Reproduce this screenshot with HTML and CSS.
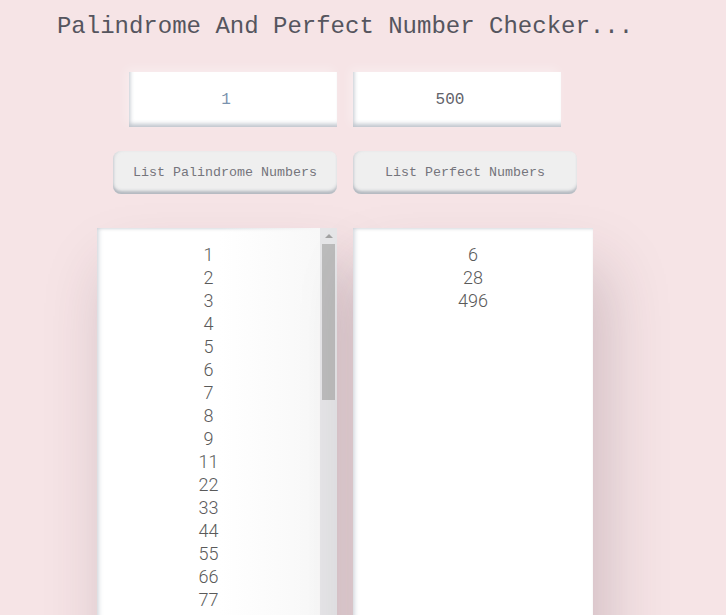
FILE: index.html
```html
<!DOCTYPE html>
<html lang="en">
<head>
<meta charset="utf-8">
<title>Palindrome And Perfect Number Checker</title>
<link rel="stylesheet" href="styles.css">
</head>
<body>
<main class="app">
  <h1 class="title">Palindrome And Perfect Number Checker...</h1>
  <div class="row inputs">
    <input class="num-input start" type="text" value="1">
    <input class="num-input end" type="text" value="500">
  </div>
  <div class="row buttons">
    <button class="btn start" type="button">List Palindrome Numbers</button>
    <button class="btn end" type="button">List Perfect Numbers</button>
  </div>
  <div class="row lists">
    <div class="list start with-scroll">
      <div class="list-body fade">
        <div>1</div><div>2</div><div>3</div><div>4</div><div>5</div><div>6</div><div>7</div><div>8</div><div>9</div>
        <div>11</div><div>22</div><div>33</div><div>44</div><div>55</div><div>66</div><div>77</div><div>88</div><div>99</div>
        <div>101</div><div>111</div><div>121</div><div>131</div><div>141</div><div>151</div><div>161</div><div>171</div><div>181</div><div>191</div>
        <div>202</div><div>212</div><div>222</div><div>232</div><div>242</div><div>252</div><div>262</div><div>272</div><div>282</div><div>292</div>
        <div>303</div><div>313</div><div>323</div><div>333</div><div>343</div><div>353</div><div>363</div><div>373</div><div>383</div><div>393</div>
        <div>404</div><div>414</div><div>424</div><div>434</div><div>444</div><div>454</div><div>464</div><div>474</div><div>484</div><div>494</div>
      </div>
      <div class="scrollbar" aria-hidden="true">
        <div class="sb-arrow"></div>
        <div class="sb-thumb"></div>
      </div>
    </div>
    <div class="list end">
      <div class="list-body">
        <div>6</div><div>28</div><div>496</div>
      </div>
    </div>
  </div>
</main>
</body>
</html>
```

FILE: styles.css
```css
html, body {
  margin: 0;
  padding: 0;
  background: #f6e4e6;
  height: 100%;
  overflow: hidden;
}

.app {
  width: 690px;
  display: flex;
  flex-direction: column;
  font-family: "Liberation Mono", "DejaVu Sans Mono", monospace;
}

.title {
  margin: 13px 0 0;
  font-size: 24px;
  line-height: 28px;
  font-weight: normal;
  color: #55555e;
  text-align: center;
  white-space: nowrap;
}

.row {
  display: grid;
  grid-template-columns: 337px 337px;
  column-gap: 16px;
}

.row .start { justify-self: end; }
.row .end { justify-self: start; }

.inputs { margin-top: 31px; }

.num-input {
  box-sizing: border-box;
  width: 208px;
  height: 55px;
  margin: 0;
  border: none;
  outline: none;
  background: #fff;
  padding: 0 14px 0 0;
  font-family: "Liberation Mono", "DejaVu Sans Mono", monospace;
  font-size: 16px;
  color: #62626a;
  text-align: center;
  box-shadow: inset 2px -4px 4px -1px rgba(170, 178, 188, 0.75),
              -3px -3px 10px rgba(255, 255, 255, 0.35);
}

.num-input.start { color: #7a93ae; }

.buttons { margin-top: 24px; }

.btn {
  box-sizing: border-box;
  width: 224px;
  height: 43px;
  margin: 0;
  border: none;
  border-radius: 8px;
  background: #efefef;
  font-family: "Liberation Mono", "DejaVu Sans Mono", monospace;
  font-size: 13.333px;
  color: #75757c;
  box-shadow: inset 0 -4px 3px -1px rgba(170, 176, 184, 0.85),
              inset 2px 0 3px -1px rgba(190, 196, 204, 0.6);
}

.lists { margin-top: 34px; }

.list {
  box-sizing: border-box;
  width: 240px;
  height: 480px;
  display: flex;
  background: #fff;
  font-family: Roboto, "Noto Sans", sans-serif;
  font-weight: 300;
  font-size: 18px;
  line-height: 23px;
  color: #5a5a5a;
  text-align: center;
  box-shadow: inset 3px 0 4px -1px rgba(180, 188, 198, 0.55),
              inset 0 2px 3px -1px rgba(190, 196, 204, 0.45),
              12px 40px 60px rgba(70, 40, 60, 0.22);
}

.list-body {
  flex: 1;
  min-width: 0;
  overflow: hidden;
  padding-top: 15px;
}

.list-body.fade {
  background: linear-gradient(to right, rgba(255,255,255,0) 0%, rgba(255,255,255,0) 55%, #f8f8f8 100%);
}

.scrollbar {
  width: 17px;
  flex: none;
  display: flex;
  flex-direction: column;
  background: #e6e6e8;
}

.sb-arrow {
  height: 16px;
  display: flex;
  justify-content: center;
  align-items: center;
}

.sb-arrow::before {
  content: "";
  width: 0;
  height: 0;
  border-left: 4px solid transparent;
  border-right: 4px solid transparent;
  border-bottom: 4px solid #a3a3a3;
  margin-left: 1px;
}

.sb-thumb {
  height: 156px;
  margin: 0 2px;
  background: #bcbcbc;
}
```
